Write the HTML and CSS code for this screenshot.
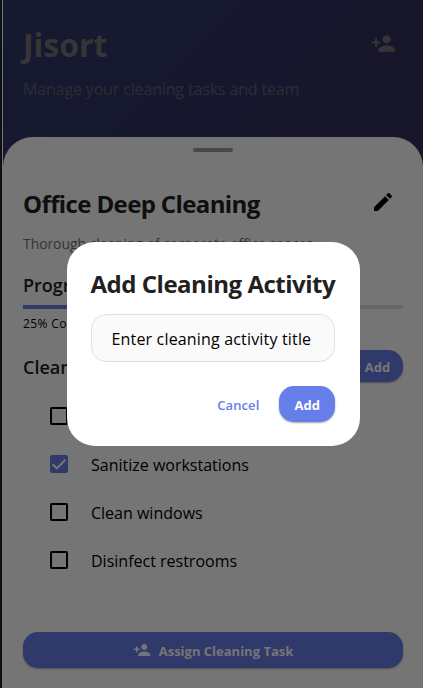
FILE: index.html
```html
<!DOCTYPE html>
<html lang="en">
<head>
<meta charset="utf-8">
<meta name="viewport" content="width=device-width, initial-scale=1">
<title>Jisort</title>
<link rel="stylesheet" href="styles.css">
</head>
<body>
<svg class="defs" aria-hidden="true">
  <symbol id="person-add" viewBox="0 0 24 24"><path d="M15 12c2.210 0 4-1.790 4-4s-1.790-4-4-4-4 1.790-4 4 1.790 4 4 4zm-9-2V7H4v3H1v2h3v3h2v-3h3v-2H6zm9 4c-2.670 0-8 1.340-8 4v2h16v-2c0-2.660-5.330-4-8-4z"/></symbol>
</svg>
<div class="app">
  <header class="header">
    <div class="header-row">
      <h1 class="brand">Jisort</h1>
      <svg class="header-icon"><use href="#person-add"/></svg>
    </div>
    <p class="tagline">Manage your cleaning tasks and team</p>
  </header>
  <main class="sheet">
    <div class="handle"></div>
    <div class="title-row">
      <h2 class="title">Office Deep Cleaning</h2>
      <svg class="edit" viewBox="0 0 24 24"><path d="M3 17.250V21h3.750L17.810 9.940l-3.750-3.750L3 17.250zM20.710 7.040c.39-.39.39-1.020 0-1.410l-2.340-2.340c-.39-.39-1.020-.39-1.410 0l-1.830 1.830 3.750 3.750 1.830-1.830z"/></svg>
    </div>
    <p class="desc">Thorough cleaning of corporate office spaces</p>
    <h3 class="section">Progress</h3>
    <div class="bar"><div class="bar-fill"></div></div>
    <p class="percent">25% Complete</p>
    <div class="activities-row">
      <h3 class="section">Cleaning Activities</h3>
      <button class="btn btn-add">Add</button>
    </div>
    <ul class="list">
      <li class="item"><span class="box"></span><span>Vacuum</span></li>
      <li class="item"><span class="box checked"><svg viewBox="0 0 18 18"><path d="M2.600 9.200l4.200 4.200 8.600-8.600"/></svg></span><span>Sanitize workstations</span></li>
      <li class="item"><span class="box"></span><span>Clean windows</span></li>
      <li class="item"><span class="box"></span><span>Disinfect restrooms</span></li>
    </ul>
    <button class="btn assign"><svg><use href="#person-add"/></svg><span>Assign Cleaning Task</span></button>
  </main>
</div>
<div class="scrim">
  <div class="dialog">
    <h2 class="dialog-title">Add Cleaning Activity</h2>
    <div class="field">Enter cleaning activity title</div>
    <div class="actions">
      <span class="cancel">Cancel</span>
      <button class="btn confirm">Add</button>
    </div>
  </div>
</div>
</body>
</html>
```
FILE: styles.css
```css
* { box-sizing: border-box; margin: 0; padding: 0; }
body {
  width: 423px; height: 688px; overflow: hidden;
  font-family: "Open Sans", "Noto Sans", sans-serif;
  color: #000; background: #fff; white-space: nowrap;
}
.defs { display: none; }
.app {
  height: 688px; display: flex; flex-direction: column;
  border-left: 2px solid #222; padding-left: 1px;
  background: linear-gradient(135deg, #2f3a6c, #36224a);
  box-shadow: inset 1px 0 #fff;
}
.header { height: 137.400px; padding: 25px 27px 0 20px; flex: none; }
.header-row { display: flex; justify-content: space-between; height: 40px; }
.brand { font-size: 32px; line-height: 40px; font-weight: 700; color: #757575; }
.header-icon { width: 25px; height: 25px; margin-top: 6px; fill: #757575; }
.tagline { margin-top: 11.500px; font-size: 16px; line-height: 24px; letter-spacing: -.15px; color: #606271; }
.sheet {
  flex: 1; padding: 10.400px 20px 20px; background: #fff;
  border-radius: 30px 30px 0 0; display: flex; flex-direction: column;
}
.handle { width: 40px; height: 4px; border-radius: 2px; background: #9e9e9e; align-self: center; flex: none; }
.title-row { display: flex; justify-content: space-between; align-items: center; height: 36px; margin-top: 34.200px; }
.title { font-size: 24px; line-height: 36px; font-weight: 700; letter-spacing: -.62px; font-variant-ligatures: none; color: #212121; }
.edit { width: 24px; height: 24px; margin-right: 8px; margin-top: -3px; }
.desc { margin-top: 12px; font-size: 14px; line-height: 20px; letter-spacing: -.08px; color: #757575; }
.section { font-size: 18px; line-height: 28px; font-weight: 600; color: #212121; }
.desc + .section { margin-top: 17px; }
.bar { height: 4px; margin-top: 5.600px; background: #e0e0e0; flex: none; }
.bar-fill { width: 25%; height: 4px; background: #667eea; }
.percent { margin-top: 7px; font-size: 12px; line-height: 16px; letter-spacing: .4px; }
.activities-row { display: flex; justify-content: space-between; align-items: center; height: 32px; margin-top: 18px; }
.activities-row .section { padding-top: 2px; }
.btn {
  border: 0; background: #667eea; color: #fff; font: 700 13px/20px "Open Sans", sans-serif;
  display: flex; align-items: center; justify-content: center; box-shadow: 0 1px 2px rgba(0, 0, 0, .35);
}
.btn-add { width: 80px; height: 32px; border-radius: 15px; padding: 3px 0 0 29px; }
.list { list-style: none; margin-top: 11.300px; }
.item { display: flex; align-items: center; height: 48px; padding: 1px 0 0 27px; font-size: 16px; }
.box { width: 18px; height: 18px; border: 2px solid #000; border-radius: 2px; margin: -3px 23px 0 0; flex: none; }
.box.checked { border: 0; background: #667eea; display: flex; }
.box svg { width: 18px; height: 18px; fill: none; stroke: #fff; stroke-width: 2; }
.assign { height: 36px; border-radius: 15px; margin-top: auto; flex: none; gap: 8px; }
.assign span { padding-top: 2px; }
.assign svg { width: 18px; height: 18px; fill: #fff; }
.scrim {
  position: absolute; inset: 0; width: 423px; height: 688px; background: rgba(0, 0, 0, .54);
  display: flex; align-items: center; justify-content: center;
}
.dialog { width: 293px; height: 204px; margin-left: 3px; padding: 24px 24.700px 24px 24px; border-radius: 28px; background: #fff; }
.dialog-title { font-size: 24px; line-height: 36px; font-weight: 700; letter-spacing: -.48px; color: #212121; }
.field {
  height: 48px; margin-top: 12px; padding: 2px 0 0 20px; border: 1px solid #e0e0e0; border-radius: 15px;
  background: #fafafa; font-size: 16px; letter-spacing: .17px; display: flex; align-items: center;
}
.actions { display: flex; justify-content: flex-end; align-items: center; gap: 19.400px; margin-top: 24px; }
.cancel { font-size: 13px; font-weight: 600; letter-spacing: .1px; padding-top: 1px; color: #667eea; }
.confirm { width: 56px; height: 36px; border-radius: 15px; padding: 2px 0 0 1px; }
```
